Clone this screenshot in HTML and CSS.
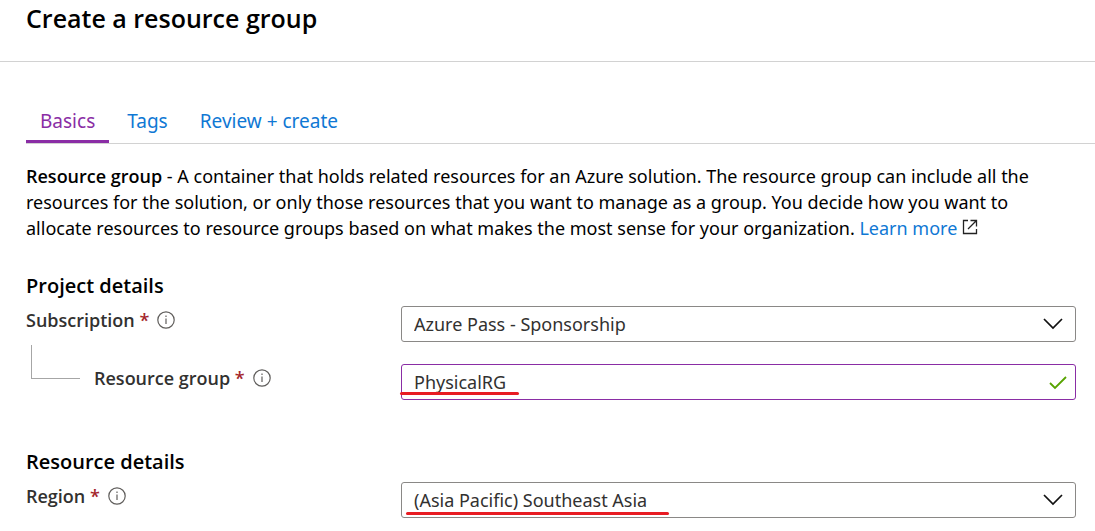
FILE: index.html
```
<!DOCTYPE html>
<html lang="en">
<head>
<meta charset="UTF-8">
<meta name="viewport" content="width=device-width, initial-scale=1.0">
<link rel="stylesheet" href="styles.css">
<title>Create a resource group</title>
</head>
<body>

<header class="page-header">
  <h1>Create a resource group</h1>
</header>

<nav class="tabs">
  <a class="tab active" href="#basics">Basics</a>
  <a class="tab" href="#tags">Tags</a>
  <a class="tab" href="#review">Review + create</a>
</nav>

<main>
  <p class="intro"><strong>Resource group</strong> - A container that holds related resources for an Azure solution. The resource group can include all the resources for the solution, or only those resources that you want to manage as a group. You decide how you want to allocate resources to resource groups based on what makes the most sense for your organization. <a href="#learn">Learn more</a>
    <svg class="external" width="16" height="16" viewBox="0 0 16 16"><path d="M6 1.5H1.5V14.5H14.5V10M8.500 1.500H14.500V7.500M14.500 1.500L6 10"/></svg>
  </p>

  <form>
    <!-- Project details -->
    <section class="section">
      <h2>Project details</h2>
      <div class="row">
        <div class="label">
          <label for="subscription">Subscription <span class="required">*</span></label>
          <svg class="info" width="18" height="18" viewBox="0 0 18 18"><circle cx="9" cy="9" r="8.200"/><path d="M9 7.500V13M9 4.500V6"/></svg>
        </div>
        <div class="field">
          <select id="subscription"><option>Azure Pass - Sponsorship</option></select>
          <svg class="chevron" width="20" height="12" viewBox="0 0 20 12"><path d="M1 1L10 10L19 1"/></svg>
        </div>
      </div>
      <div class="row">
        <div class="label">
          <span class="branch"></span>
          <label for="group">Resource group <span class="required">*</span></label>
          <svg class="info" width="18" height="18" viewBox="0 0 18 18"><circle cx="9" cy="9" r="8.200"/><path d="M9 7.500V13M9 4.500V6"/></svg>
        </div>
        <div class="field">
          <input class="valid" type="text" id="group" value="PhysicalRG">
          <svg class="check" width="18" height="14" viewBox="0 0 18 14"><path d="M1 7L6 12L17 1"/></svg>
          <span class="mark mark-group"></span>
        </div>
      </div>
    </section>

    <!-- Resource details -->
    <section class="section">
      <h2>Resource details</h2>
      <div class="row">
        <div class="label">
          <label for="region">Region <span class="required">*</span></label>
          <svg class="info" width="18" height="18" viewBox="0 0 18 18"><circle cx="9" cy="9" r="8.200"/><path d="M9 7.500V13M9 4.500V6"/></svg>
        </div>
        <div class="field">
          <select id="region"><option>(Asia Pacific) Southeast Asia</option></select>
          <svg class="chevron" width="20" height="12" viewBox="0 0 20 12"><path d="M1 1L10 10L19 1"/></svg>
          <span class="mark mark-region"></span>
        </div>
      </div>
    </section>
  </form>
</main>

</body>
</html>
```

FILE: styles.css
```
* { box-sizing: border-box; }
body { margin: 0; background: #fff; color: #000; font-family: "Segoe UI", "Noto Sans", sans-serif; font-size: 18px; line-height: 26px; }
h1, h2, p { margin: 0; }
a { color: #0f78d4; text-decoration: none; }
svg { fill: none; flex: none; }

.page-header { padding: 2px 26px 27px; border-bottom: 1px solid #d2d2d2; }
h1, h2, strong, .label { font-family: "Segoe UI", "Open Sans", sans-serif; }
h1 { font-size: 25px; line-height: 32px; font-weight: 600; }
h2 { font-size: 20px; line-height: 26px; font-weight: 600; }

.tabs { display: flex; gap: 4px; margin: 46px 0 0 26px; border-bottom: 1px solid #d2d2d2; }
.tab { padding: 0 14px 6px; border-bottom: 3px solid transparent; font-size: 19px; }
.tab.active { color: #8a2da5; border-color: #8a2da5; }

main { padding: 19px 19px 12px 26px; }
.intro strong { font-weight: 600; }
.external { stroke: #222; stroke-width: 1.3; }

.section { margin-top: 32px; }
.section + .section { margin-top: 49px; }
.row { display: flex; margin-top: 7px; }
.row + .row { margin-top: 22px; }
.label { display: flex; align-items: center; gap: 8px; width: 375px; height: 28px; color: #323130; font-weight: 600; }
.required { color: #a4262c; }
.info { stroke: #605e5c; stroke-width: 1.2; }
.branch { align-self: flex-end; width: 49px; height: 34px; margin: 0 6px 13px 5px; border-left: 1px solid #a6a6a6; border-bottom: 1px solid #a6a6a6; }

.field { position: relative; flex: 1; }
.field input, .field select { display: block; width: 100%; height: 36px; padding: 0 44px 0 12px; border: 1px solid #8a8886; border-radius: 3px; background: #fff; color: #323130; font: inherit; appearance: none; outline: none; }
.field .valid { border-color: #8a2da5; }
.chevron, .check { position: absolute; top: 12px; right: 13px; pointer-events: none; }
.chevron { stroke: #111; stroke-width: 1.7; }
.check { right: 9px; stroke: #57a300; stroke-width: 1.8; }

/* red underlines drawn over the values */
.mark { position: absolute; height: 3px; border-radius: 2px; background: #e81c23; }
.mark-group { left: -1px; bottom: 5px; width: 119px; }
.mark-region { left: 5px; bottom: 3px; width: 263px; }
```
